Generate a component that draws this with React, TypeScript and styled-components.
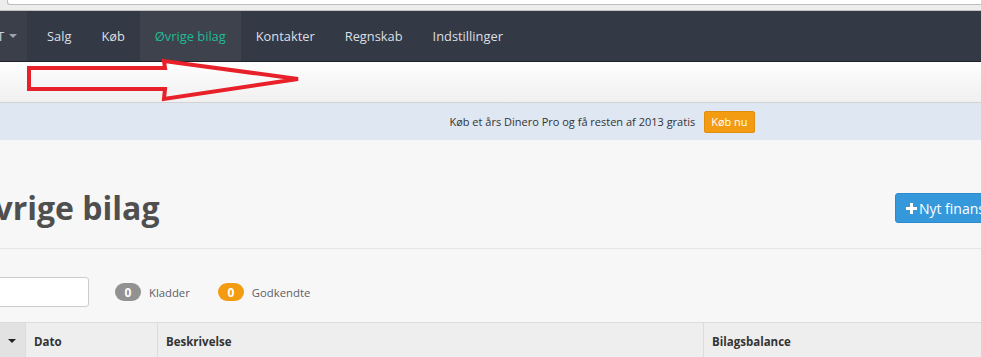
import React from 'react';
import styled, { createGlobalStyle, css } from 'styled-components';

const GlobalStyle = createGlobalStyle`
  html, body {
    margin: 0;
    padding: 0;
    background: #f7f7f7;
    font-family: 'Open Sans', 'DejaVu Sans', sans-serif;
    overflow: hidden;
  }
`;

const Page = styled.div`
  position: relative;
  width: 981px;
  height: 357px;
  overflow: hidden;
  background: #f7f7f7;
`;

const Chrome = styled.div`
  height: 10px;
  background: #ededed;
  border-bottom: 1px solid #c2c2c2;
`;

const AddressBox = styled.div`
  margin-left: 7px;
  height: 4px;
  background: #ffffff;
  border: 1px solid #bdbdbd;
  border-top: none;
  border-right: none;
  border-radius: 0 0 0 3px;
`;

const NavBar = styled.nav`
  display: flex;
  height: 50px;
  background: #333a45;
  border-bottom: 1px solid #1e2228;
`;

const Brand = styled.div`
  display: flex;
  align-items: center;
  width: 27px;
  background: #3a3f4a;
  color: #d0d3d8;
  font-size: 13px;
  overflow: hidden;
  white-space: nowrap;
`;

const BrandText = styled.span`
  margin-left: -3px;
`;

const Caret = styled.span<{ color: string }>`
  display: inline-block;
  width: 0;
  height: 0;
  margin-left: 5px;
  border-left: 4px solid transparent;
  border-right: 4px solid transparent;
  border-top: 4px solid ${({ color }) => color};
`;

const NavList = styled.ul`
  display: flex;
  margin: 0 0 0 5px;
  padding: 0;
  list-style: none;
`;

const NavItem = styled.li<{ $active?: boolean }>`
  padding: 0 15px;
  line-height: 50px;
  font-size: 12.85px;
  color: #dcdfe4;
  ${({ $active }) =>
    $active &&
    css`
      background: #3e424d;
      color: #1fbc93;
    `}
`;

const SubBar = styled.div`
  height: 40px;
  background: linear-gradient(#fefefe, #f0f0f0);
  border-bottom: 1px solid #d3d3d3;
`;

const ArrowLayer = styled.svg`
  position: absolute;
  left: 0;
  top: 0;
  pointer-events: none;
`;

const Banner = styled.div`
  display: flex;
  align-items: center;
  justify-content: center;
  gap: 9px;
  height: 37px;
  padding-left: 223px;
  background: #dfe7f2;
  font-size: 11px;
  color: #333333;
`;

const BuyButton = styled.button`
  height: 22px;
  padding: 0 6px;
  background: #f39c12;
  border: 1px solid #e08e0b;
  border-radius: 2px;
  color: #ffffff;
  font-family: inherit;
  font-size: 11px;
`;

const Main = styled.main`
  width: 1055px;
  margin-left: -26px;
`;

const Header = styled.div`
  display: flex;
  justify-content: space-between;
  align-items: flex-start;
  height: 108px;
  border-bottom: 1px solid #e6e6e6;
`;

const Title = styled.h1`
  margin: 46px 0 0 -5px;
  font-size: 32px;
  line-height: 44px;
  font-weight: 700;
  color: #4f4f4f;
`;

const NewButton = styled.button`
  display: flex;
  align-items: center;
  gap: 2px;
  height: 30px;
  margin-top: 53px;
  padding: 0 12px 0 10px;
  background: #3498db;
  border: 1px solid #2a8bd0;
  border-radius: 3px;
  color: #ffffff;
  font-family: inherit;
  font-size: 14px;
  white-space: nowrap;
`;

const FilterRow = styled.div`
  display: flex;
  align-items: center;
  padding-top: 28px;
`;

const Search = styled.input`
  box-sizing: border-box;
  width: 115px;
  height: 30px;
  margin: 0;
  background: #ffffff;
  border: 1px solid #cccccc;
  border-radius: 3px;
`;

const Status = styled.div`
  display: flex;
  align-items: center;
  gap: 8px;
  margin-left: 26px;
  & + & {
    margin-left: 28px;
  }
`;

const Badge = styled.span<{ color: string }>`
  display: inline-flex;
  align-items: center;
  justify-content: center;
  width: 26px;
  height: 18px;
  border-radius: 9px;
  background: ${({ color }) => color};
  color: #ffffff;
  font-size: 12px;
  font-weight: 700;
`;

const StatusLabel = styled.span`
  font-size: 11.3px;
  color: #5e5e66;
`;

const TableHead = styled.div`
  display: grid;
  grid-template-columns: 51px 132px 546px 1fr;
  margin-top: 15px;
  border-top: 1px solid #dcdcdc;
  background: #eeeeee;
`;

const HeadCell = styled.div`
  display: flex;
  align-items: center;
  height: 36px;
  padding-left: 8px;
  border-left: 1px solid #dcdcdc;
  font-size: 11.5px;
  font-weight: 700;
  color: #333333;
`;

const SelectCell = styled(HeadCell)`
  justify-content: flex-end;
  padding: 0 9px 0 0;
  border-left: none;
  background: #e2e2e2;
`;

const nav_items = ['Salg', 'Køb', 'Øvrige bilag', 'Kontakter', 'Regnskab', 'Indstillinger'];

function PlusIcon() {
  return (
    <svg width='11' height='11' viewBox='0 0 11 11'>
      <path d='M4 0h3v4h4v3H7v4H4V7H0V4h4z' fill='#ffffff' />
    </svg>
  );
}

export default function App() {
  return (
    <Page>
      <GlobalStyle />
      <Chrome>
        <AddressBox />
      </Chrome>

      <NavBar>
        <Brand>
          <BrandText>T</BrandText>
          <Caret color='#9ea3ab' />
        </Brand>
        <NavList>
          {nav_items.map((item) => (
            <NavItem key={item} $active={item === 'Øvrige bilag'}>
              {item}
            </NavItem>
          ))}
        </NavList>
      </NavBar>

      <SubBar />

      <Banner>
        <span>Køb et års Dinero Pro og få resten af 2013 gratis</span>
        <BuyButton>Køb nu</BuyButton>
      </Banner>

      <Main>
        <Header>
          <Title>Øvrige bilag</Title>
          <NewButton>
            <PlusIcon />
            Nyt finansbilag
          </NewButton>
        </Header>

        <FilterRow>
          <Search />
          <Status>
            <Badge color='#929292'>0</Badge>
            <StatusLabel>Kladder</StatusLabel>
          </Status>
          <Status>
            <Badge color='#f39c12'>0</Badge>
            <StatusLabel>Godkendte</StatusLabel>
          </Status>
        </FilterRow>

        <TableHead>
          <SelectCell>
            <Caret color='#222222' />
          </SelectCell>
          <HeadCell>Dato</HeadCell>
          <HeadCell>Beskrivelse</HeadCell>
          <HeadCell>Bilagsbalance</HeadCell>
        </TableHead>
      </Main>

      {/* red arrow drawn over the screenshot */}
      <ArrowLayer width='981' height='357'>
        <path
          d='M29 68 L165 68 L164 61 L298 79 L164 99 L165 89 L29 89 Z'
          fill='none'
          stroke='#e8202a'
          strokeWidth='4'
          strokeLinejoin='miter'
        />
      </ArrowLayer>
    </Page>
  );
}
